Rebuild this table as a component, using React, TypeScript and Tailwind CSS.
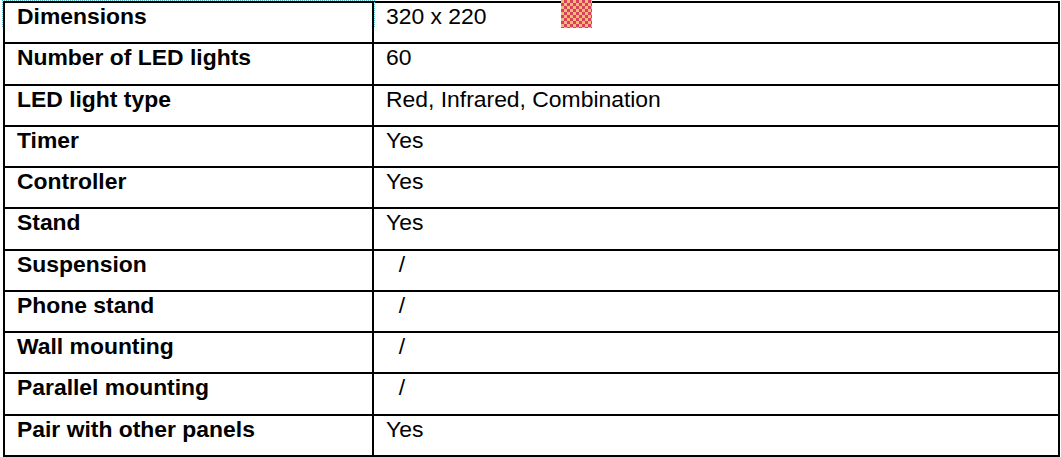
import React from 'react';

const rows: [string, string][] = [
  ['Dimensions', '320 x 220'],
  ['Number of LED lights', '60'],
  ['LED light type', 'Red, Infrared, Combination'],
  ['Timer', 'Yes'],
  ['Controller', 'Yes'],
  ['Stand', 'Yes'],
  ['Suspension', '  /'],
  ['Phone stand', '  /'],
  ['Wall mounting', '  /'],
  ['Parallel mounting', '  /'],
  ['Pair with other panels', 'Yes'],
];

export default function App() {
  return (
    <div
      className="relative h-[457px] w-[1061px] overflow-hidden bg-white pl-[3px] pt-[1px] text-black"
      style={{ fontFamily: '"Liberation Sans", Arial, sans-serif' }}
    >
      <div className="w-[1057px] border-b-2 border-l-2 border-r-2 border-black">
        {rows.map(([label, value]) => (
          <div key={label} className="flex h-[41.27px] border-t-2 border-black">
            <div className="w-[369px] shrink-0 border-r-2 border-black pl-3 text-[22.9px] font-bold leading-[26px]">
              {label}
            </div>
            <div className="whitespace-pre pl-3 text-[22.9px] leading-[26px]">{value}</div>
          </div>
        ))}
      </div>

      {/* text frame marks left over from the source document */}
      <div className="absolute left-[2px] top-0 h-[27px] w-[373px] border-l border-r border-t border-dotted border-[#5cc0ca]" />
      <div className="absolute left-[561px] top-0 h-[28px] w-[31px] bg-[repeating-conic-gradient(#d8405e_0_25%,#f4b878_0_50%)] bg-[length:6px_6px]" />
    </div>
  );
}
